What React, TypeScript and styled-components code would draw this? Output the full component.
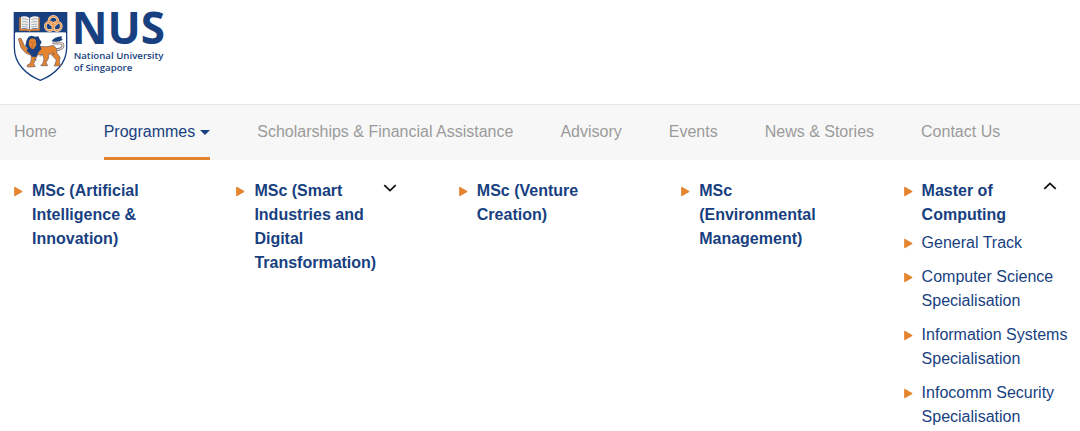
import React from "react";
import styled, { createGlobalStyle } from "styled-components";

const navy = "#183f7f";
const orange = "#e5842f";

const GlobalStyle = createGlobalStyle`
  *, *::before, *::after { box-sizing: border-box; }
  body {
    margin: 0;
    background: #fff;
    color: ${navy};
    font-family: "Liberation Sans", Arial, Helvetica, sans-serif;
    font-size: 16px;
    line-height: 24px;
  }
  ul { list-style: none; margin: 0; padding: 0; }
  a { color: inherit; text-decoration: none; }
`;

const Header = styled.header`
  padding-bottom: 14px;
`;

const HomeLink = styled.a`
  display: block;
  width: fit-content;
  svg { display: block; }
`;

const NavBar = styled.nav`
  background: #f7f7f7;
  border-top: 1px solid #e4e4e4;
  padding: 0 14px;
`;

const NavList = styled.ul`
  display: flex;
  gap: 47px;
`;

const NavLink = styled.a<{ $active?: boolean }>`
  display: flex;
  align-items: center;
  gap: 5px;
  height: 55px;
  padding-top: 2px;
  border-bottom: 3px solid ${(p) => (p.$active ? orange : "transparent")};
  white-space: nowrap;
  && { color: ${(p) => (p.$active ? navy : "#9b9b9b")}; }
`;

const Caret = styled.span`
  border: 5px solid transparent;
  border-top-color: ${navy};
  border-bottom: 0;
`;

const Menu = styled.ul`
  display: grid;
  grid-template-columns: repeat(5, minmax(0, 1fr));
  column-gap: 56px;
  padding: 19px 10px 3px 14px;
`;

const Heading = styled.div`
  display: flex;
  align-items: flex-start;
`;

const ItemLink = styled.a<{ $bold?: boolean }>`
  display: flex;
  flex: 1;
  gap: 9px;
  min-width: 0;
  font-weight: ${(p) => (p.$bold ? 700 : 400)};
  svg { flex: none; margin-top: 7px; }
`;

const Toggle = styled.button<{ $open?: boolean }>`
  display: flex;
  justify-content: center;
  flex: none;
  width: ${(p) => (p.$open ? 40 : 26)}px;
  padding: ${(p) => (p.$open ? 3 : 5)}px 0 0;
  border: 0;
  background: none;
  color: #111;
  cursor: pointer;
`;

const SubMenu = styled.ul`
  display: flex;
  flex-direction: column;
  gap: 10px;
  padding-top: 4px;
`;

const Arrow = () => (
  <svg width="9" height="11" viewBox="0 0 9 11" aria-hidden="true">
    <path d="M.7 1.2 8.2 5.5.7 9.8Z" fill={orange} stroke={orange} strokeLinejoin="round" />
  </svg>
);

const Chevron = ({ up }: { up?: boolean }) => (
  <svg width="14" height="8" viewBox="0 0 14 8" fill="none" stroke="currentColor" strokeWidth="1.8" aria-hidden="true">
    <path d={up ? "M1.3 6.8 7 1.4l5.7 5.4" : "M1.3 1.2 7 6.6l5.7-5.4"} />
  </svg>
);

const Logo = () => (
  <svg width="180" height="90" viewBox="0 0 540 270" role="img" aria-label="National University of Singapore">
    <path d="M43 38H200V143C200 190 164 224 121 241C78 224 43 190 43 143Z" fill="#fff" stroke={navy} strokeWidth="4" />
    <path d="M42 37H201V98H42Z" fill={navy} />
    <path d="M47 98H196" stroke="#fff" strokeWidth="2" />
    {/* open book */}
    <path d="M58 52H62V87H84L89 90 94 87H115V52H119V92H94L89 95 84 92H58Z" fill={orange} />
    <path d="M63 50Q77 47 88 53V89Q77 83 63 86ZM90 53Q101 47 115 50V86Q101 83 90 89Z" fill="#f7efe6" />
    <path d="M66 57q9-2 18 2M66 65q9-2 18 2M66 73q9-2 18 2M66 80q9-2 18 2M94 59q9-4 18-2M94 67q9-4 18-2M94 75q9-4 18-2M94 82q9-4 18-2" stroke="#9fb1cb" strokeWidth="3" fill="none" />
    {/* interlaced rings */}
    <g fill="none" stroke="#f8dcbd" strokeWidth="8">
      <circle cx="160" cy="62" r="13" />
      <circle cx="149" cy="79" r="13" />
      <circle cx="171" cy="79" r="13" />
    </g>
    <g fill="none" stroke="#ea9a50" strokeWidth="4">
      <circle cx="160" cy="62" r="13" />
      <circle cx="149" cy="79" r="13" />
      <circle cx="171" cy="79" r="13" />
    </g>
    {/* lion: tail, body, mane and face */}
    <path d="M162 149C179 151 193 143 188 132C182 124 168 135 158 126" fill="none" stroke="#5d719a" strokeWidth="8" />
    <path d="M162 149C179 151 193 143 188 132C182 124 168 135 158 126" fill="none" stroke="#f6cfa9" strokeWidth="4" />
    <path d="M155 124Q162 110 187 109Q181 117 189 119Q176 128 155 124Z" fill={navy} />
    <path
      d="M55 117 62 114 67 123 73 137 84 148 101 143 119 139Q141 143 161 136L170 147 171 160 180 171 178 189 183 197 163 198 166 190 169 180 154 164 147 160 145 176 138 187 143 197 122 197 129 189 132 177 128 164 112 165 106 180 101 191 106 200 82 201 82 195 91 190 94 178 93 166 78 160 63 143 59 130Z"
      fill={orange}
      stroke="#6b5a68"
      strokeWidth="2"
      strokeLinejoin="round"
    />
    <path d="M80 120 86 110 95 107 106 110 115 109 119 118 125 126 120 136 124 147 116 156 109 170 98 171 88 160 80 153 83 145 76 138Z" fill={navy} />
    <path d="M88 120Q96 112 107 119L109 133 104 145 97 148 89 141 86 131Z" fill={orange} />
    <path d="M91 127h5m5 0h5M98 128v8m-5 5h9" stroke="#a8593a" strokeWidth="2" />
    <path d="M158 157 163 165M126 163 120 170M103 176 109 182" stroke={navy} strokeWidth="2" />
    <g fill={navy} fontFamily='"Open Sans", "Noto Sans", sans-serif' fontWeight="600">
      <text x="215" y="132" fontSize="132" fontWeight="700">NUS</text>
      <text x="221" y="177" fontSize="29">National University</text>
      <text x="221" y="212" fontSize="29">of Singapore</text>
    </g>
  </svg>
);

const navItems = [
  "Home",
  "Programmes",
  "Scholarships & Financial Assistance",
  "Advisory",
  "Events",
  "News & Stories",
  "Contact Us",
];

type Programme = { title: string; toggle?: boolean; tracks?: string[] };

const programmes: Programme[] = [
  { title: "MSc (Artificial Intelligence & Innovation)" },
  { title: "MSc (Smart Industries and Digital Transformation)", toggle: true },
  { title: "MSc (Venture Creation)" },
  { title: "MSc (Environmental Management)" },
  {
    title: "Master of Computing",
    toggle: true,
    tracks: [
      "General Track",
      "Computer Science Specialisation",
      "Information Systems Specialisation",
      "Infocomm Security Specialisation",
    ],
  },
];

export default function App() {
  return (
    <>
      <GlobalStyle />
      <Header>
        <HomeLink href="#"><Logo /></HomeLink>
      </Header>
      <NavBar>
        <NavList>
          {navItems.map((item) => {
            const active = item === "Programmes";
            return (
              <li key={item}>
                <NavLink href="#" $active={active}>
                  {item}
                  {active && <Caret />}
                </NavLink>
              </li>
            );
          })}
        </NavList>
      </NavBar>
      <Menu>
        {programmes.map(({ title, toggle, tracks }) => (
          <li key={title}>
            <Heading>
              <ItemLink href="#" $bold><Arrow /><span>{title}</span></ItemLink>
              {toggle && (
                <Toggle type="button" $open={!!tracks} aria-expanded={!!tracks} aria-label={`Tracks of ${title}`}>
                  <Chevron up={!!tracks} />
                </Toggle>
              )}
            </Heading>
            {tracks && (
              <SubMenu>
                {tracks.map((track) => (
                  <li key={track}>
                    <ItemLink href="#"><Arrow /><span>{track}</span></ItemLink>
                  </li>
                ))}
              </SubMenu>
            )}
          </li>
        ))}
      </Menu>
    </>
  );
}
